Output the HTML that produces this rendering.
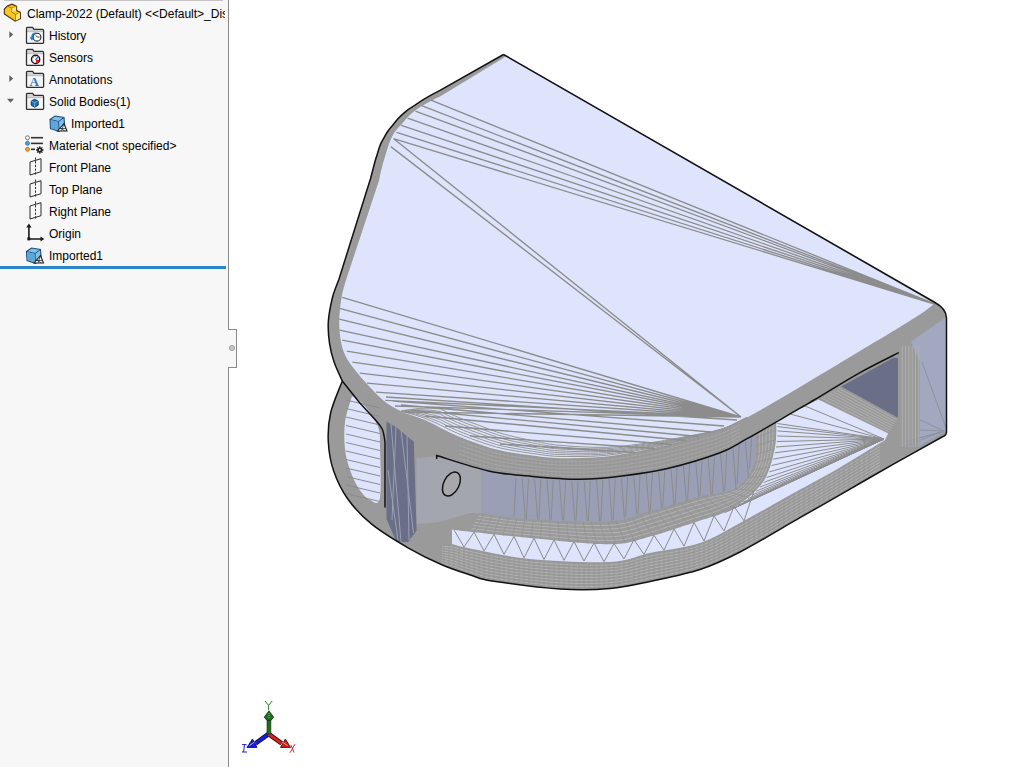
<!DOCTYPE html>
<html><head><meta charset="utf-8">
<style>
html,body{margin:0;padding:0;width:1031px;height:767px;overflow:hidden;background:#fff;font-family:"Liberation Sans",sans-serif;}
#panel{position:absolute;left:0;top:0;width:228px;height:767px;background:#f7f7f7;}
#pborder{position:absolute;left:228px;top:0;width:1px;height:767px;background:#8a8a8a;}
#tab{position:absolute;left:228px;top:329px;width:9px;height:39px;background:#f7f7f7;border:1px solid #8a8a8a;border-left:none;box-sizing:border-box;}
#dot{position:absolute;left:229px;top:345px;width:6px;height:6px;border-radius:50%;background:#c8c8c8;border:1px solid #9a9a9a;box-sizing:border-box;}
#topbox{position:absolute;left:4px;top:-10px;width:219px;height:11px;border:1px solid #c4c4c4;box-sizing:border-box;}
.row{position:absolute;height:22px;font-size:12px;color:#000;white-space:nowrap;line-height:22px;}
.ic{position:absolute;}
#bl{position:absolute;left:0;top:266px;width:226px;height:3px;background:#2a86c6;}
#view{position:absolute;left:0;top:0;}
</style></head><body>
<svg width="1031" height="767" style="position:absolute;left:0;top:0;">
<path d="M503.5,54.5 L935,302.5 Q946.5,309 946.5,318 L946.5,432 Q946.5,435.5 942,437 C933.8,441.6 910.0,454.8 893.0,464.4 C876.0,474.0 855.5,485.9 840.0,494.8 C824.5,503.7 816.7,508.2 800.0,517.7 C783.3,527.2 756.7,543.4 740.0,552.0 C723.3,560.6 715.0,564.6 700.0,569.5 C685.0,574.4 665.0,578.2 650.0,581.4 C635.0,584.6 625.0,587.2 610.0,588.5 C595.0,589.8 579.7,590.2 560.0,589.0 C540.3,587.8 506.7,583.2 492.0,581.0 C477.3,578.8 480.3,578.2 472.0,575.5 C463.7,572.8 453.1,569.6 442.4,565.0 C431.7,560.4 419.8,554.6 408.0,547.8 C396.2,541.0 381.7,532.3 371.7,524.2 C361.7,516.1 354.2,508.0 347.8,499.0 C341.4,490.0 336.8,479.9 333.5,470.4 C330.2,460.8 328.8,451.3 328.3,441.7 C327.8,432.1 328.3,423.1 330.6,413.0 C332.9,402.9 340.4,386.3 342.3,381.0 C340.9,377.9 336.2,368.3 334.1,362.1 C332.0,355.9 330.6,350.6 329.6,343.9 C328.6,337.2 327.9,329.6 328.3,322.0 C328.8,314.4 330.6,305.2 332.3,298.2 C334.0,291.2 337.6,283.0 338.7,280.0L370.4,179 C373,170 375,160 376.9,155.6 C379,148 380,144 382.1,141.2 C386,134 388,130 391.3,126.9 C396,121 399,117 403,113.9 C407,110 411,107.5 414.7,105.4 C422,100 430,95.5 440,90.4 L503.5,54.5Z" fill="#9a9a9a"/>
<path d="M506,56.2 L934.5,303.6  C924.2,313.5 882.8,337.5 860.0,351.0 C837.2,364.5 818.8,375.9 800.0,387.0 C781.2,398.1 760.3,410.4 747.0,417.6 C733.7,424.8 730.5,426.5 720.0,430.3 C709.5,434.1 695.2,437.3 684.1,440.3 C673.0,443.3 666.0,445.4 653.1,448.1 C640.2,450.8 622.1,454.9 606.6,456.6 C591.1,458.3 572.3,458.4 560.0,458.2 C547.7,458.0 543.2,457.1 532.6,455.6 C522.0,454.2 508.9,452.8 496.4,449.5 C483.9,446.2 469.5,440.9 457.6,436.0 C445.7,431.1 434.3,424.1 425.0,420.0 C415.7,415.9 408.5,414.7 401.6,411.4 C394.7,408.1 389.2,405.0 383.4,400.4 C377.6,395.8 371.6,388.9 367.0,384.0 C362.4,379.1 359.4,375.4 356.0,371.2 C352.6,366.9 349.3,363.1 346.9,358.5 C344.5,353.9 342.7,350.0 341.4,343.9 C340.1,337.8 339.2,329.6 339.2,322.0 C339.2,314.4 340.3,305.2 341.4,298.2 C342.5,291.2 345.2,283.0 346.0,280.0 L379.2,180 C381,170 383,163 384.5,158.2 C387,150 389,143 391.2,138.5 C394,132 397.5,128 401.5,124.5 C407,117 413,111 421,106.5 C428,102.5 434,99 440,96.5 L503,58.3 Z" fill="#dde4fc"/>
<path d="M946.5,317 L946.5,429 L943,432.5 L920,445.5 L920,362 L911,341.6 Z" fill="#a2a8c0"/>
<path d="M944,431 L920,420 M944,431 L920,430 M944,431 L920,438 M944,431 L905,442 M944,431 L900,448" stroke="#8f93a3" stroke-width="1" fill="none"/>
<path d="M841.3,386.5 L893.4,357.8 L898,358 L898,417.8 Z" fill="#6a6e86"/>
<path d="M818.4,399.5 L888.2,433.4 L885,440 C877.5,444.6 854.2,459.1 840.0,467.4 C825.8,475.7 816.7,480.3 800.0,489.6 C783.3,498.9 756.7,514.1 740.0,523.0 C723.3,531.9 715.0,538.0 700.0,543.0 C685.0,548.0 665.0,549.8 650.0,553.0 C635.0,556.2 630.0,561.0 610.0,562.0 C590.0,563.0 553.3,561.2 530.0,559.0 C506.7,556.8 483.0,551.0 470.0,548.5 C457.0,546.0 455.0,544.8 452.0,544.0 L452,529.5 C455.0,529.9 457.0,530.4 470.0,531.8 C483.0,533.2 506.7,535.9 530.0,538.0 C553.3,540.1 590.0,544.5 610.0,544.3 C630.0,544.1 635.0,540.6 650.0,536.6 C665.0,532.6 687.8,524.5 700.0,520.5 C712.2,516.5 715.7,516.4 723.5,512.7 C731.3,509.1 740.0,504.5 747.0,498.6 C754.0,492.7 761.0,486.1 765.7,477.5 C770.4,468.9 773.2,456.0 775.0,447.0 C776.8,438.0 776.1,427.4 776.3,423.5 L776.3,421 L818.4,399.5Z" fill="#dde4fc"/>
<path d="M352.0,396.0 C353.7,397.2 358.5,399.5 362.0,403.0 C365.5,406.5 370.2,412.5 373.0,417.0 C375.8,421.5 377.8,425.3 379.0,430.0 C380.2,434.7 379.8,433.7 380.0,445.0 C380.2,456.3 381.7,488.8 380.0,498.0 C378.3,507.2 373.5,501.5 370.0,500.0 C366.5,498.5 362.3,494.0 359.0,489.0 C355.7,484.0 352.3,476.7 350.0,470.0 C347.7,463.3 345.8,457.0 345.0,449.0 C344.2,441.0 343.8,430.8 345.0,422.0 C346.2,413.2 350.8,400.3 352.0,396.0Z" fill="#dde4fc"/>
<path d="M480,468 C488.8,469.6 515.9,475.4 532.6,477.5 C549.3,479.6 565.1,480.4 580.0,480.3 C594.9,480.2 607.2,478.8 622.0,477.0 C636.8,475.2 652.3,473.2 668.6,469.3 C684.9,465.4 706.9,458.7 720.0,453.8 C733.1,448.9 740.8,443.0 747.0,439.7 C753.2,436.4 755.3,434.9 757.0,434.0 L756,437.6 C755.7,442.3 757.5,457.1 754.0,465.7 C750.5,474.3 744.0,483.9 735.0,489.0 C726.0,494.1 714.2,492.8 700.0,496.5 C685.8,500.2 665.0,506.9 650.0,511.0 C635.0,515.1 630.0,520.0 610.0,521.4 C590.0,522.8 551.7,520.7 530.0,519.3 C508.3,517.9 488.3,514.0 480.0,513.0Z" fill="#9a9fb6"/>
<path d="M416.6,458 L437,456.5 L470,466 L481,468.5 L481,513 L470,513 L440,522 L416.6,524 Z" fill="#a3a5af"/>
<path d="M386.5,421.6 L396.6,427.4 L413.8,441.7 L416.6,530.6 L408,542 L396.6,542 L386.5,519 Z" fill="#6a6e86"/>
<path d="M391,424 L401,542 M401,430 L413.5,533 M388,470 L398,540 M396,427 L392,520 M407,436 L409,540" stroke="#9aa0b4" stroke-width="1" fill="none"/>
<path d="M516.0,478.1 L514.0,517.5 M522.2,478.4 L525.2,518.3 M528.4,478.7 L526.4,519.1 M534.6,479.0 L537.6,519.4 M540.8,479.3 L538.8,519.6 M547.0,479.7 L550.0,519.7 M553.2,480.0 L551.2,519.9 M559.4,480.3 L562.4,520.1 M565.6,480.6 L563.6,520.2 M571.8,480.9 L574.8,520.4 M578.0,481.2 L576.0,520.6 M584.2,481.0 L587.2,520.7 M590.4,480.5 L588.4,520.9 M596.6,480.0 L599.6,521.0 M602.8,479.5 L600.8,521.2 M609.0,479.0 L612.0,521.4 M615.2,478.5 L613.2,520.0 M621.4,478.0 L624.4,518.4 M627.6,477.1 L625.6,516.8 M633.8,476.1 L636.8,515.2 M640.0,475.0 L638.0,513.6 M646.2,474.0 L649.2,512.0 M652.4,473.0 L650.4,510.3 M658.6,472.0 L661.6,508.5 M664.8,470.9 L662.8,506.7 M671.0,469.6 L674.0,504.9 M677.2,467.7 L675.2,503.1 M683.4,465.8 L686.4,501.3 M689.6,464.0 L687.6,499.5 M695.8,462.1 L698.8,497.7 M702.0,460.2 L700.0,496.1 M708.2,458.4 L711.2,494.7 M714.4,456.5 L712.4,493.4 M720.6,454.5 L723.6,492.1 M726.8,451.2 L724.8,490.8 M733.0,448.0 L736.0,489.4 M739.2,444.8 L737.2,483.8 M745.4,441.5 L748.4,476.2 M751.6,438.1 L749.6,468.6 M884,439 L777.3,423.5 M884,439 L777.3,426.6 M884,439 L777.3,430.9 M884,439 L777.2,436.0 M884,439 L776.8,441.5 M884,439 L776.0,447.0 M884,439 L774.8,452.8 M884,439 L773.3,459.1 M884,439 L771.5,465.6 M884,439 L769.3,471.9 M884,439 L766.7,477.5 M884,439 L763.6,482.4 M884,439 L760.1,487.0 M884,439 L756.3,491.1 M884,439 L752.2,495.0 M884,439 L748.0,498.6 M884,439 L743.2,502.1 M884,439 L737.8,505.4 M884,439 L732.4,508.4 M884,439 L727.8,510.9 M884,439 L724.5,512.7 M884,439 L790.0,414.0 M884,439 L805.0,406.0 M454.0,529.8 L464.0,547.0 L474.0,532.2 L484.0,550.9 L494.0,534.3 L504.0,554.4 L514.0,536.3 L524.0,557.9 L534.0,538.3 L544.0,559.5 L554.0,539.9 L564.0,560.3 L574.0,541.5 L584.0,561.0 L594.0,543.0 L604.0,561.8 L614.0,543.5 L624.0,558.9 L634.0,539.7 L644.0,554.4 L654.0,535.3 L664.0,550.2 L674.0,528.9 L684.0,546.2 L694.0,522.4 L704.0,541.0 L714.0,515.9 L724.0,531.0 L734.0,506.4 L744.0,520.8 L754.0,490.7 M346.0,400.0 L380,408.0 M346.0,408.5 L380,416.5 M346.0,417.0 L380,425.0 M346.0,425.5 L380,433.5 M346.0,434.0 L380,442.0 M346.0,442.5 L380,450.5 M346.0,451.0 L380,459.0 M346.0,459.5 L380,467.5 M346.0,468.0 L380,476.0 M346.0,476.5 L380,484.5 M346.0,485.0 L380,493.0 M346.0,493.5 L380,501.5" stroke="#8c8c8c" stroke-width="1" fill="none"/>
<path d="M442.0,546.3 L452.9,547.0 L463.9,550.1 L474.9,552.5 L485.8,554.9 L496.8,557.0 L507.7,559.0 L518.6,560.6 L529.6,562.0 L540.5,562.9 L551.5,563.7 L562.5,564.4 L573.4,564.9 L584.4,565.2 L595.3,565.3 L606.2,565.1 L617.2,564.3 L628.1,562.3 L639.1,559.1 L650.0,556.1 L661.0,554.1 L672.0,552.3 L682.9,550.3 L693.9,547.8 L704.8,544.2 L715.8,539.4 L726.7,533.5 L737.6,527.5 L748.6,521.6 L759.5,515.5 L770.5,509.3 L781.5,503.2 L792.4,497.0 L803.4,490.9 L814.3,484.8 L825.2,478.8 L836.2,472.6 L847.1,466.2 L858.1,459.6 L869.0,453.0 L880.0,446.3 M442.0,548.7 L452.9,549.7 L463.9,552.9 L474.9,555.5 L485.8,558.0 L496.8,560.1 L507.7,562.0 L518.6,563.6 L529.6,565.0 L540.5,566.0 L551.5,566.8 L562.5,567.5 L573.4,568.0 L584.4,568.3 L595.3,568.3 L606.2,568.0 L617.2,567.3 L628.1,565.3 L639.1,562.1 L650.0,559.3 L661.0,557.2 L672.0,555.3 L682.9,553.3 L693.9,550.7 L704.8,547.2 L715.8,542.4 L726.7,536.7 L737.6,530.7 L748.6,524.8 L759.5,518.7 L770.5,512.5 L781.5,506.3 L792.4,500.1 L803.4,494.0 L814.3,487.9 L825.2,481.9 L836.2,475.7 L847.1,469.3 L858.1,462.7 L869.0,456.1 L880.0,449.5 M442.0,551.0 L452.9,552.4 L463.9,555.7 L474.9,558.5 L485.8,561.2 L496.8,563.2 L507.7,565.0 L518.6,566.6 L529.6,568.0 L540.5,569.0 L551.5,569.9 L562.5,570.6 L573.4,571.1 L584.4,571.3 L595.3,571.3 L606.2,571.0 L617.2,570.2 L628.1,568.2 L639.1,565.2 L650.0,562.5 L661.0,560.4 L672.0,558.4 L682.9,556.2 L693.9,553.7 L704.8,550.1 L715.8,545.5 L726.7,539.8 L737.6,533.9 L748.6,528.0 L759.5,521.9 L770.5,515.7 L781.5,509.5 L792.4,503.3 L803.4,497.1 L814.3,491.0 L825.2,484.9 L836.2,478.7 L847.1,472.3 L858.1,465.8 L869.0,459.3 L880.0,452.7 M442.0,553.3 L452.9,555.2 L463.9,558.6 L474.9,561.5 L485.8,564.3 L496.8,566.3 L507.7,568.1 L518.6,569.7 L529.6,571.0 L540.5,572.1 L551.5,573.0 L562.5,573.7 L573.4,574.2 L584.4,574.4 L595.3,574.3 L606.2,574.0 L617.2,573.1 L628.1,571.2 L639.1,568.3 L650.0,565.6 L661.0,563.5 L672.0,561.4 L682.9,559.2 L693.9,556.6 L704.8,553.1 L715.8,548.5 L726.7,543.0 L737.6,537.1 L748.6,531.2 L759.5,525.1 L770.5,518.9 L781.5,512.7 L792.4,506.4 L803.4,500.2 L814.3,494.1 L825.2,488.0 L836.2,481.8 L847.1,475.4 L858.1,468.9 L869.0,462.4 L880.0,455.9 M442.0,555.7 L452.9,557.9 L463.9,561.4 L474.9,564.5 L485.8,567.4 L496.8,569.4 L507.7,571.1 L518.6,572.7 L529.6,574.0 L540.5,575.1 L551.5,576.0 L562.5,576.8 L573.4,577.2 L584.4,577.4 L595.3,577.4 L606.2,576.9 L617.2,576.0 L628.1,574.2 L639.1,571.4 L650.0,568.8 L661.0,566.6 L672.0,564.5 L682.9,562.2 L693.9,559.6 L704.8,556.1 L715.8,551.5 L726.7,546.1 L737.6,540.4 L748.6,534.5 L759.5,528.4 L770.5,522.1 L781.5,515.8 L792.4,509.5 L803.4,503.3 L814.3,497.2 L825.2,491.0 L836.2,484.8 L847.1,478.5 L858.1,472.0 L869.0,465.6 L880.0,459.1 M442.0,558.0 L452.9,560.6 L463.9,564.2 L474.9,567.5 L485.8,570.5 L496.8,572.5 L507.7,574.1 L518.6,575.7 L529.6,577.0 L540.5,578.1 L551.5,579.1 L562.5,579.9 L573.4,580.3 L584.4,580.5 L595.3,580.4 L606.2,579.9 L617.2,579.0 L628.1,577.1 L639.1,574.5 L650.0,571.9 L661.0,569.7 L672.0,567.6 L682.9,565.2 L693.9,562.5 L704.8,559.0 L715.8,554.6 L726.7,549.3 L737.6,543.6 L748.6,537.7 L759.5,531.6 L770.5,525.3 L781.5,519.0 L792.4,512.7 L803.4,506.4 L814.3,500.3 L825.2,494.1 L836.2,487.9 L847.1,481.5 L858.1,475.1 L869.0,468.7 L880.0,462.3 M442.0,560.3 L452.9,563.4 L463.9,567.1 L474.9,570.5 L485.8,573.7 L496.8,575.5 L507.7,577.2 L518.6,578.7 L529.6,580.0 L540.5,581.2 L551.5,582.2 L562.5,582.9 L573.4,583.4 L584.4,583.6 L595.3,583.4 L606.2,582.9 L617.2,581.9 L628.1,580.1 L639.1,577.6 L650.0,575.1 L661.0,572.9 L672.0,570.6 L682.9,568.2 L693.9,565.5 L704.8,562.0 L715.8,557.6 L726.7,552.4 L737.6,546.8 L748.6,540.9 L759.5,534.8 L770.5,528.5 L781.5,522.2 L792.4,515.8 L803.4,509.6 L814.3,503.3 L825.2,497.1 L836.2,490.9 L847.1,484.6 L858.1,478.2 L869.0,471.8 L880.0,465.5 M442.0,562.7 L452.9,566.1 L463.9,569.9 L474.9,573.5 L485.8,576.8 L496.8,578.6 L507.7,580.2 L518.6,581.7 L529.6,583.0 L540.5,584.2 L551.5,585.3 L562.5,586.0 L573.4,586.5 L584.4,586.6 L595.3,586.4 L606.2,585.8 L617.2,584.8 L628.1,583.0 L639.1,580.7 L650.0,578.2 L661.0,576.0 L672.0,573.7 L682.9,571.2 L693.9,568.4 L704.8,564.9 L715.8,560.7 L726.7,555.6 L737.6,550.0 L748.6,544.1 L759.5,538.0 L770.5,531.7 L781.5,525.3 L792.4,519.0 L803.4,512.7 L814.3,506.4 L825.2,500.2 L836.2,493.9 L847.1,487.6 L858.1,481.3 L869.0,475.0 L880.0,468.7" stroke="#b9b9b9" stroke-width="0.8" fill="none"/>
<path d="M444.0,544.5 L444.0,565.1 M449.0,544.5 L449.0,566.9 M454.0,545.1 L454.0,568.7 M459.0,546.6 L459.0,570.5 M464.0,547.8 L464.0,572.3 M469.0,548.8 L469.0,574.0 M474.0,549.8 L474.0,575.7 M479.0,550.8 L479.0,577.7 M484.0,551.9 L484.0,579.1 M489.0,552.9 L489.0,580.0 M494.0,553.9 L494.0,580.8 M499.0,554.9 L499.0,581.5 M504.0,555.8 L504.0,582.2 M509.0,556.7 L509.0,582.9 M514.0,557.5 L514.0,583.6 M519.0,558.2 L519.0,584.2 M524.0,558.8 L524.0,584.9 M529.0,559.4 L529.0,585.5 M534.0,559.9 L534.0,586.0 M539.0,560.3 L539.0,586.6 M544.0,560.7 L544.0,587.1 M549.0,561.0 L549.0,587.6 M554.0,561.3 L554.0,588.0 M559.0,561.6 L559.0,588.4 M564.0,561.9 L564.0,588.7 M569.0,562.1 L569.0,589.0 M574.0,562.3 L574.0,589.1 M579.0,562.5 L579.0,589.2 M584.0,562.6 L584.0,589.2 M589.0,562.7 L589.0,589.1 M594.0,562.8 L594.0,589.0 M599.0,562.8 L599.0,588.8 M604.0,562.7 L604.0,588.5 M609.0,562.5 L609.0,588.1 M614.0,562.2 L614.0,587.6 M619.0,561.6 L619.0,587.0 M624.0,560.8 L624.0,586.2 M629.0,559.6 L629.0,585.3 M634.0,558.1 L634.0,584.3 M639.0,556.5 L639.0,583.3 M644.0,555.0 L644.0,582.2 M649.0,553.7 L649.0,581.1 M654.0,552.7 L654.0,580.1 M659.0,551.8 L659.0,579.0 M664.0,551.0 L664.0,578.0 M669.0,550.2 L669.0,576.9 M674.0,549.4 L674.0,575.8 M679.0,548.5 L679.0,574.7 M684.0,547.5 L684.0,573.5 M689.0,546.5 L689.0,572.2 M694.0,545.3 L694.0,570.8 M699.0,543.8 L699.0,569.3 M704.0,542.1 L704.0,567.6 M709.0,540.0 L709.0,565.9 M714.0,537.7 L714.0,563.9 M719.0,535.2 L719.0,561.8 M724.0,532.4 L724.0,559.5 M729.0,529.6 L729.0,557.1 M734.0,526.8 L734.0,554.6 M739.0,524.0 L739.0,552.0 M744.0,521.3 L744.0,549.4 M749.0,518.6 L749.0,546.7 M754.0,515.9 L754.0,543.9 M759.0,513.1 L759.0,541.0 M764.0,510.3 L764.0,538.2 M769.0,507.5 L769.0,535.3 M774.0,504.7 L774.0,532.4 M779.0,501.9 L779.0,529.4 M784.0,499.1 L784.0,526.5 M789.0,496.3 L789.0,523.6 M794.0,493.5 L794.0,520.7 M799.0,490.7 L799.0,517.8 M804.0,487.9 L804.0,514.9 M809.0,485.1 L809.0,512.1 M814.0,482.4 L814.0,509.2 M819.0,479.7 L819.0,506.3 M824.0,476.9 L824.0,503.5 M829.0,474.2 L829.0,500.6 M834.0,471.4 L834.0,497.7 M839.0,468.5 L839.0,494.9 M844.0,465.5 L844.0,492.0 M849.0,462.5 L849.0,489.1 M854.0,459.5 L854.0,486.3 M859.0,456.5 L859.0,483.4 M864.0,453.4 L864.0,480.5 M869.0,450.4 L869.0,477.7" stroke="#929292" stroke-width="0.6" fill="none"/>
<path d="M761.0,428.5 L759.9,432.4 L759.4,436.6 L759.3,440.9 L759.3,445.1 L759.3,449.3 L759.1,453.5 L758.7,457.7 L757.9,461.9 L756.6,465.9 L754.9,469.8 L752.9,473.5 L750.7,477.1 L748.1,480.5 L745.3,483.7 L742.2,486.5 L738.9,489.0 L735.2,491.1 L731.3,492.7 L727.3,493.9 L723.3,494.9 L719.2,495.8 L715.1,496.6 L711.0,497.5 L706.9,498.5 L702.8,499.6 L698.8,500.7 L694.7,501.9 L690.6,503.1 L686.6,504.3 L682.5,505.5 L678.5,506.7 L674.4,508.0 L670.4,509.2 L666.3,510.4 L662.3,511.7 L658.2,512.9 L654.1,514.1 L650.1,515.3 L646.0,516.5 L642.0,517.9 L638.0,519.3 L634.0,520.7 L630.0,522.0 L625.9,523.0 L621.7,523.9 L617.6,524.5 L613.4,525.0 L609.1,525.3 L604.9,525.5 L600.7,525.5 L596.4,525.6 L592.2,525.5 L588.0,525.5 L583.7,525.3 L579.5,525.2 L575.3,525.0 L571.0,524.9 L566.8,524.7 L562.6,524.4 L558.3,524.2 L554.1,524.0 L549.9,523.7 L545.7,523.4 L541.4,523.2 L537.2,522.9 L533.0,522.6 L528.8,522.3 L524.5,522.0 L520.3,521.6 L516.1,521.2 L511.9,520.7 L507.7,520.2 L503.5,519.7 L499.3,519.1 L495.1,518.5 L490.9,517.9 L486.7,517.3 L482.5,516.7 L478.3,516.1 M764.1,427.0 L763.2,431.0 L762.7,435.3 L762.6,439.6 L762.6,443.9 L762.5,448.3 L762.2,452.6 L761.7,456.9 L760.8,461.1 L759.5,465.2 L757.9,469.2 L756.0,473.1 L753.8,476.8 L751.4,480.4 L748.6,483.7 L745.5,486.7 L742.2,489.4 L738.6,491.7 L734.8,493.6 L730.8,495.2 L726.8,496.5 L722.8,497.7 L718.7,498.9 L714.5,500.0 L710.4,501.2 L706.3,502.5 L702.2,503.7 L698.0,504.9 L693.8,506.1 L689.7,507.4 L685.5,508.6 L681.4,509.9 L677.3,511.2 L673.1,512.5 L669.0,513.8 L664.8,515.1 L660.7,516.4 L656.6,517.6 L652.4,518.8 L648.3,520.1 L644.2,521.5 L640.0,522.9 L635.9,524.2 L631.8,525.5 L627.6,526.7 L623.4,527.6 L619.1,528.3 L614.8,528.7 L610.5,529.0 L606.2,529.2 L601.8,529.3 L597.5,529.3 L593.2,529.2 L588.8,529.1 L584.5,528.9 L580.2,528.8 L575.8,528.6 L571.5,528.3 L567.2,528.1 L562.9,527.8 L558.5,527.5 L554.2,527.3 L549.9,527.0 L545.6,526.7 L541.3,526.3 L536.9,526.0 L532.6,525.7 L528.3,525.4 L524.0,525.0 L519.7,524.6 L515.3,524.2 L511.0,523.7 L506.7,523.2 L502.4,522.7 L498.1,522.2 L493.8,521.6 L489.5,521.0 L485.3,520.4 L481.0,519.8 L476.7,519.3 M767.1,425.5 L766.4,429.5 L766.1,433.9 L766.0,438.4 L766.0,442.8 L765.8,447.2 L765.3,451.6 L764.7,456.0 L763.8,460.3 L762.5,464.5 L760.9,468.7 L759.1,472.7 L757.0,476.6 L754.6,480.3 L751.8,483.7 L748.8,486.9 L745.5,489.8 L741.9,492.4 L738.2,494.5 L734.3,496.5 L730.4,498.2 L726.3,499.7 L722.2,501.1 L718.1,502.6 L713.9,504.0 L709.8,505.4 L705.5,506.8 L701.3,508.0 L697.0,509.2 L692.8,510.5 L688.6,511.8 L684.3,513.1 L680.1,514.5 L675.9,515.8 L671.7,517.2 L667.4,518.5 L663.2,519.8 L659.0,521.1 L654.7,522.4 L650.5,523.7 L646.3,525.1 L642.1,526.4 L637.8,527.8 L633.6,529.1 L629.3,530.3 L625.0,531.3 L620.7,532.0 L616.3,532.5 L611.8,532.8 L607.4,533.0 L603.0,533.0 L598.5,533.0 L594.1,532.9 L589.7,532.7 L585.3,532.6 L580.8,532.3 L576.4,532.1 L572.0,531.8 L567.6,531.5 L563.2,531.2 L558.7,530.9 L554.3,530.5 L549.9,530.2 L545.5,529.9 L541.1,529.5 L536.7,529.2 L532.2,528.8 L527.8,528.5 L523.4,528.1 L519.0,527.7 L514.6,527.2 L510.2,526.8 L505.8,526.3 L501.4,525.8 L497.0,525.2 L492.6,524.7 L488.2,524.1 L483.8,523.5 L479.4,522.9 L475.0,522.4 M770.2,424.0 L769.7,428.1 L769.5,432.6 L769.4,437.1 L769.3,441.6 L769.0,446.1 L768.4,450.6 L767.7,455.1 L766.7,459.5 L765.5,463.9 L764.0,468.1 L762.2,472.3 L760.2,476.3 L757.8,480.2 L755.1,483.8 L752.1,487.1 L748.8,490.2 L745.3,493.0 L741.6,495.5 L737.8,497.8 L733.9,499.8 L729.9,501.7 L725.8,503.4 L721.6,505.1 L717.4,506.7 L713.2,508.3 L708.9,509.8 L704.6,511.0 L700.2,512.3 L695.9,513.6 L691.6,515.0 L687.3,516.4 L683.0,517.8 L678.7,519.2 L674.3,520.6 L670.0,522.0 L665.7,523.3 L661.4,524.7 L657.1,526.0 L652.7,527.3 L648.4,528.7 L644.1,530.0 L639.8,531.3 L635.4,532.7 L631.1,533.9 L626.7,534.9 L622.2,535.7 L617.7,536.3 L613.2,536.6 L608.7,536.7 L604.1,536.8 L599.6,536.7 L595.1,536.6 L590.6,536.4 L586.0,536.2 L581.5,535.9 L577.0,535.6 L572.5,535.3 L568.0,534.9 L563.4,534.6 L558.9,534.2 L554.4,533.8 L549.9,533.4 L545.4,533.1 L540.9,532.7 L536.4,532.3 L531.9,531.9 L527.3,531.5 L522.8,531.1 L518.3,530.7 L513.8,530.3 L509.3,529.8 L504.8,529.3 L500.3,528.8 L495.8,528.3 L491.3,527.7 L486.8,527.2 L482.3,526.6 L477.8,526.1 L473.3,525.5 M773.2,422.5 L773.0,426.6 L772.9,431.2 L772.8,435.9 L772.6,440.5 L772.3,445.1 L771.5,449.7 L770.7,454.2 L769.7,458.7 L768.4,463.2 L767.0,467.6 L765.3,471.9 L763.4,476.0 L761.1,480.0 L758.4,483.8 L755.4,487.3 L752.1,490.6 L748.7,493.6 L745.0,496.4 L741.3,499.1 L737.4,501.4 L733.4,503.6 L729.3,505.7 L725.2,507.6 L720.9,509.5 L716.7,511.2 L712.3,512.8 L707.9,514.1 L703.4,515.4 L699.0,516.7 L694.6,518.1 L690.2,519.6 L685.8,521.0 L681.4,522.5 L677.0,523.9 L672.6,525.4 L668.2,526.8 L663.8,528.2 L659.4,529.6 L655.0,530.9 L650.5,532.3 L646.1,533.6 L641.7,534.9 L637.2,536.2 L632.8,537.5 L628.3,538.6 L623.7,539.4 L619.2,540.0 L614.5,540.3 L609.9,540.5 L605.3,540.5 L600.7,540.4 L596.0,540.3 L591.4,540.0 L586.8,539.8 L582.2,539.5 L577.6,539.1 L573.0,538.7 L568.3,538.4 L563.7,538.0 L559.1,537.5 L554.5,537.1 L549.9,536.7 L545.3,536.3 L540.7,535.8 L536.1,535.4 L531.5,535.0 L526.9,534.6 L522.3,534.2 L517.7,533.7 L513.1,533.3 L508.5,532.8 L503.9,532.3 L499.3,531.8 L494.7,531.3 L490.1,530.8 L485.5,530.2 L480.9,529.7 L476.3,529.2 L471.7,528.7" stroke="#b8b8b8" stroke-width="0.8" fill="none"/>
<path d="M758.0,430.0 L776.3,421.0 M756.0,438.0 L776.3,429.9 M756.0,446.2 L776.0,439.3 M756.0,454.5 L774.7,448.7 M754.9,462.7 L772.6,457.9 M751.8,470.3 L770.0,467.0 M747.5,477.4 L766.6,475.8 M742.1,483.6 L761.6,483.8 M735.5,488.7 L755.4,491.0 M727.9,491.7 L748.5,497.4 M719.8,493.3 L741.0,503.1 M711.6,494.3 L732.9,508.0 M703.4,495.7 L724.5,512.2 M695.4,497.7 L715.7,515.8 M687.4,500.0 L706.6,518.4 M679.5,502.3 L697.6,521.3 M671.6,504.7 L688.7,524.3 M663.6,507.1 L679.7,527.3 M655.7,509.4 L670.7,530.3 M647.7,511.7 L661.7,533.2 M639.9,514.3 L652.7,535.9 M632.1,517.1 L643.6,538.4 M624.2,519.4 L634.5,541.1 M616.0,520.8 L625.3,543.2 M607.8,521.5 L615.9,544.1 M599.5,521.8 L606.4,544.3 M591.2,521.8 L597.0,544.0 M583.0,521.7 L587.6,543.4 M574.7,521.5 L578.1,542.6 M566.4,521.2 L568.7,541.8 M558.1,520.9 L559.3,540.9 M549.9,520.5 L549.9,539.9 M541.6,520.0 L540.5,539.0 M533.4,519.5 L531.1,538.1 M525.1,518.9 L521.7,537.2 M516.9,518.2 L512.3,536.3 M508.7,517.2 L502.9,535.3 M500.5,516.1 L493.5,534.3 M492.3,514.9 L484.1,533.3 M484.1,513.6 L474.7,532.3" stroke="#8e8e8e" stroke-width="0.6" fill="none"/>
<path d="M460.0,441.2 L467.0,443.7 L474.0,446.3 L481.0,448.7 L488.0,450.9 L495.0,452.9 L502.0,454.6 L509.0,455.9 L516.0,457.0 L523.0,457.9 L530.0,458.8 L537.0,459.7 L544.0,460.6 L551.0,461.2 L558.0,461.6 L565.0,461.7 L572.0,461.7 L579.0,461.7 L586.0,461.5 L593.0,461.2 L600.0,460.7 L607.0,460.1 L614.0,459.2 L621.0,458.1 L628.0,456.9 L635.0,455.6 L642.0,454.3 L649.0,452.8 L656.0,451.4 L663.0,449.8 L670.0,448.1 L677.0,446.2 L684.0,444.3 L691.0,442.5 L698.0,440.6 L705.0,438.7 L712.0,436.7 L719.0,434.4 L726.0,431.8 L733.0,428.6 L740.0,424.9 M460.0,445.5 L467.0,448.0 L474.0,450.4 L481.0,452.8 L488.0,454.9 L495.0,456.8 L502.0,458.3 L509.0,459.6 L516.0,460.6 L523.0,461.4 L530.0,462.3 L537.0,463.1 L544.0,464.0 L551.0,464.6 L558.0,465.0 L565.0,465.1 L572.0,465.2 L579.0,465.2 L586.0,465.0 L593.0,464.7 L600.0,464.3 L607.0,463.6 L614.0,462.7 L621.0,461.7 L628.0,460.6 L635.0,459.4 L642.0,458.1 L649.0,456.7 L656.0,455.3 L663.0,453.8 L670.0,452.0 L677.0,450.2 L684.0,448.3 L691.0,446.4 L698.0,444.5 L705.0,442.6 L712.0,440.5 L719.0,438.1 L726.0,435.5 L733.0,432.3 L740.0,428.5 M460.0,449.9 L467.0,452.3 L474.0,454.6 L481.0,456.8 L488.0,458.9 L495.0,460.6 L502.0,462.1 L509.0,463.2 L516.0,464.2 L523.0,465.0 L530.0,465.8 L537.0,466.6 L544.0,467.3 L551.0,468.0 L558.0,468.4 L565.0,468.6 L572.0,468.7 L579.0,468.7 L586.0,468.6 L593.0,468.3 L600.0,467.8 L607.0,467.1 L614.0,466.3 L621.0,465.3 L628.0,464.3 L635.0,463.1 L642.0,461.9 L649.0,460.6 L656.0,459.2 L663.0,457.7 L670.0,456.0 L677.0,454.2 L684.0,452.3 L691.0,450.4 L698.0,448.5 L705.0,446.4 L712.0,444.3 L719.0,441.9 L726.0,439.2 L733.0,435.9 L740.0,432.1 M460.0,454.2 L467.0,456.5 L474.0,458.8 L481.0,460.9 L488.0,462.8 L495.0,464.5 L502.0,465.8 L509.0,466.9 L516.0,467.8 L523.0,468.5 L530.0,469.3 L537.0,470.0 L544.0,470.7 L551.0,471.3 L558.0,471.8 L565.0,472.0 L572.0,472.2 L579.0,472.2 L586.0,472.1 L593.0,471.8 L600.0,471.3 L607.0,470.7 L614.0,469.9 L621.0,468.9 L628.0,467.9 L635.0,466.8 L642.0,465.7 L649.0,464.5 L656.0,463.1 L663.0,461.7 L670.0,460.0 L677.0,458.2 L684.0,456.3 L691.0,454.4 L698.0,452.4 L705.0,450.3 L712.0,448.1 L719.0,445.7 L726.0,442.9 L733.0,439.6 L740.0,435.6 M460.0,458.5 L467.0,460.8 L474.0,462.9 L481.0,465.0 L488.0,466.8 L495.0,468.3 L502.0,469.6 L509.0,470.6 L516.0,471.4 L523.0,472.1 L530.0,472.8 L537.0,473.5 L544.0,474.1 L551.0,474.7 L558.0,475.2 L565.0,475.5 L572.0,475.7 L579.0,475.8 L586.0,475.7 L593.0,475.3 L600.0,474.9 L607.0,474.2 L614.0,473.4 L621.0,472.5 L628.0,471.6 L635.0,470.6 L642.0,469.5 L649.0,468.3 L656.0,467.1 L663.0,465.6 L670.0,464.0 L677.0,462.2 L684.0,460.3 L691.0,458.3 L698.0,456.3 L705.0,454.1 L712.0,451.9 L719.0,449.4 L726.0,446.6 L733.0,443.2 L740.0,439.2" stroke="#acacac" stroke-width="0.8" fill="none"/>
<path d="M462.0,438.1 L462.0,463.0 M466.0,439.6 L466.0,464.2 M470.0,441.1 L470.0,465.4 M474.0,442.6 L474.0,466.6 M478.0,444.0 L478.0,467.7 M482.0,445.5 L482.0,468.8 M486.0,446.8 L486.0,469.8 M490.0,448.1 L490.0,470.7 M494.0,449.3 L494.0,471.5 M498.0,450.4 L498.0,472.2 M502.0,451.3 L502.0,472.8 M506.0,452.2 L506.0,473.4 M510.0,452.9 L510.0,473.9 M514.0,453.5 L514.0,474.3 M518.0,454.1 L518.0,474.7 M522.0,454.7 L522.0,475.1 M526.0,455.2 L526.0,475.4 M530.0,455.8 L530.0,475.8 M534.0,456.3 L534.0,476.1 M538.0,456.9 L538.0,476.5 M542.0,457.4 L542.0,476.8 M546.0,457.9 L546.0,477.2 M550.0,458.3 L550.0,477.5 M554.0,458.5 L554.0,477.8 M558.0,458.7 L558.0,478.1 M562.0,458.7 L562.0,478.3 M566.0,458.7 L566.0,478.5 M570.0,458.8 L570.0,478.6 M574.0,458.7 L574.0,478.8 M578.0,458.7 L578.0,478.8 M582.0,458.6 L582.0,478.8 M586.0,458.5 L586.0,478.7 M590.0,458.3 L590.0,478.5 M594.0,458.1 L594.0,478.3 M598.0,457.8 L598.0,478.0 M602.0,457.5 L602.0,477.7 M606.0,457.2 L606.0,477.3 M610.0,456.7 L610.0,476.9 M614.0,456.1 L614.0,476.5 M618.0,455.5 L618.0,476.0 M622.0,454.9 L622.0,475.5 M626.0,454.1 L626.0,475.0 M630.0,453.4 L630.0,474.5 M634.0,452.6 L634.0,474.0 M638.0,451.8 L638.0,473.4 M642.0,451.0 L642.0,472.8 M646.0,450.1 L646.0,472.2 M650.0,449.3 L650.0,471.5 M654.0,448.4 L654.0,470.8 M658.0,447.5 L658.0,470.1 M662.0,446.6 L662.0,469.3 M666.0,445.6 L666.0,468.4 M670.0,444.6 L670.0,467.5 M674.0,443.5 L674.0,466.5 M678.0,442.4 L678.0,465.4 M682.0,441.4 L682.0,464.4 M686.0,440.3 L686.0,463.2 M690.0,439.3 L690.0,462.1 M694.0,438.2 L694.0,460.9 M698.0,437.2 L698.0,459.7 M702.0,436.2 L702.0,458.4 M706.0,435.1 L706.0,457.2 M710.0,434.0 L710.0,455.8 M714.0,432.8 L714.0,454.5 M718.0,431.5 L718.0,453.0 M722.0,430.1 L722.0,451.5 M726.0,428.5 L726.0,449.9 M730.0,426.9 L730.0,448.0" stroke="#939393" stroke-width="0.5" fill="none"/>
<path d="M821.3,397.9 L889.2,432.0 M824.1,396.2 L890.5,429.9 M827.0,394.6 L891.8,427.9 M829.8,393.0 L893.0,425.9 M832.7,391.4 L894.2,423.9 M835.6,389.8 L895.5,421.9 M838.4,388.1 L896.8,419.8 M902.3,346 L902.3,447 M905.6,346 L905.6,447 M908.9,346 L908.9,447 M912.2,346 L912.2,447 M915.5,346 L915.5,447 M918.8,346 L918.8,447" stroke="#b5b5b5" stroke-width="0.8" fill="none"/>
<path d="M922,362 L946,428" stroke="#8c8c8c" stroke-width="0.8"/>
<path d="M747.0,417.6 L744.2,419.0 L740.3,421.0 L735.7,423.3 L730.7,425.8 L725.3,428.1 L720.0,430.2 L714.5,432.0 L708.5,433.7 L702.3,435.3 L696.0,436.9 L689.9,438.4 L684.1,439.8 L678.8,441.2 L674.0,442.4 L669.3,443.6 L664.4,444.8 L659.1,446.0 L653.1,447.3 L646.2,448.7 L638.8,450.2 L630.8,451.7 L622.7,453.1 L614.5,454.3 L606.6,455.3 L598.6,455.9 L590.4,456.3 L582.1,456.5 L574.1,456.5 L566.7,456.5 L560.0,456.4 L554.4,456.2 L549.8,455.8 L545.6,455.4 L541.7,454.8 L537.5,454.2 L532.6,453.5 L527.1,452.7 L521.3,451.8 L515.2,450.9 L509.0,449.8 L502.7,448.5 L496.4,447.0 L490.0,445.1 L483.4,443.0 L476.8,440.7 L470.2,438.3 L463.7,435.8 L457.6,433.3 L451.7,430.7 L445.9,427.9 L440.3,425.0 L435.0,422.5 L429.8,420.3 L425.0,418.3 L420.3,416.7 L415.7,415.2 L411.3,413.9 L407.3,412.9 L404.0,412.0 L401.6,411.3 M747.0,417.6 L744.2,419.0 L740.3,421.0 L735.7,423.3 L730.7,425.8 L725.3,428.1 L720.0,430.1 L714.5,431.8 L708.5,433.5 L702.3,435.0 L696.0,436.5 L689.9,437.9 L684.1,439.3 L678.8,440.6 L674.0,441.8 L669.3,443.0 L664.4,444.1 L659.1,445.3 L653.1,446.4 L646.2,447.7 L638.8,449.2 L630.8,450.6 L622.7,451.9 L614.5,453.1 L606.6,453.9 L598.6,454.5 L590.4,454.8 L582.1,454.9 L574.1,454.9 L566.7,454.7 L560.0,454.5 L554.4,454.3 L549.8,453.9 L545.6,453.4 L541.7,452.8 L537.5,452.1 L532.6,451.3 L527.1,450.5 L521.3,449.6 L515.2,448.6 L509.0,447.4 L502.7,446.1 L496.4,444.5 L490.0,442.5 L483.4,440.3 L476.8,438.0 L470.2,435.6 L463.7,433.1 L457.6,430.6 L451.7,428.0 L445.9,425.2 L440.3,422.3 L435.0,420.2 L429.8,418.2 L425.0,416.6 L420.3,415.3 L415.7,414.2 L411.3,413.2 L407.3,412.4 L404.0,411.7 L401.6,411.2 M747.0,417.6 L744.2,419.0 L740.3,421.0 L735.7,423.3 L730.7,425.8 L725.3,428.0 L720.0,430.0 L714.5,431.6 L708.5,433.2 L702.3,434.7 L696.0,436.1 L689.9,437.5 L684.1,438.8 L678.8,440.1 L674.0,441.2 L669.3,442.3 L664.4,443.4 L659.1,444.5 L653.1,445.6 L646.2,446.8 L638.8,448.2 L630.8,449.5 L622.7,450.8 L614.5,451.8 L606.6,452.6 L598.6,453.1 L590.4,453.3 L582.1,453.3 L574.1,453.2 L566.7,453.0 L560.0,452.7 L554.4,452.4 L549.8,451.9 L545.6,451.4 L541.7,450.8 L537.5,450.0 L532.6,449.2 L527.1,448.3 L521.3,447.3 L515.2,446.3 L509.0,445.1 L502.7,443.6 L496.4,441.9 L490.0,439.9 L483.4,437.7 L476.8,435.3 L470.2,432.9 L463.7,430.4 L457.6,427.9 L451.7,425.3 L445.9,422.5 L440.3,419.6 L435.0,417.8 L429.8,416.2 L425.0,414.9 L420.3,413.9 L415.7,413.1 L411.3,412.4 L407.3,411.9 L404.0,411.4 L401.6,411.1 M747.0,417.6 L744.2,419.0 L740.3,421.0 L735.7,423.3 L730.7,425.8 L725.3,428.0 L720.0,429.9 L714.5,431.5 L708.5,433.0 L702.3,434.4 L696.0,435.8 L689.9,437.1 L684.1,438.3 L678.8,439.5 L674.0,440.6 L669.3,441.7 L664.4,442.7 L659.1,443.7 L653.1,444.8 L646.2,445.9 L638.8,447.2 L630.8,448.5 L622.7,449.6 L614.5,450.6 L606.6,451.3 L598.6,451.6 L590.4,451.8 L582.1,451.7 L574.1,451.5 L566.7,451.2 L560.0,450.9 L554.4,450.5 L549.8,450.0 L545.6,449.4 L541.7,448.7 L537.5,448.0 L532.6,447.1 L527.1,446.1 L521.3,445.1 L515.2,444.0 L509.0,442.7 L502.7,441.2 L496.4,439.4 L490.0,437.3 L483.4,435.0 L476.8,432.6 L470.2,430.2 L463.7,427.7 L457.6,425.2 L451.7,422.6 L445.9,419.8 L440.3,416.9 L435.0,415.4 L429.8,414.2 L425.0,413.2 L420.3,412.6 L415.7,412.0 L411.3,411.7 L407.3,411.4 L404.0,411.2 L401.6,411.0 M747.0,417.6 L744.2,419.0 L740.3,421.0 L735.7,423.3 L730.7,425.8 L725.3,427.9 L720.0,429.8 L714.5,431.3 L708.5,432.8 L702.3,434.1 L696.0,435.4 L689.9,436.6 L684.1,437.8 L678.8,439.0 L674.0,440.0 L669.3,441.0 L664.4,442.0 L659.1,443.0 L653.1,443.9 L646.2,445.0 L638.8,446.2 L630.8,447.4 L622.7,448.5 L614.5,449.3 L606.6,449.9 L598.6,450.2 L590.4,450.3 L582.1,450.1 L574.1,449.8 L566.7,449.4 L560.0,449.0 L554.4,448.6 L549.8,448.0 L545.6,447.4 L541.7,446.7 L537.5,445.9 L532.6,444.9 L527.1,443.9 L521.3,442.8 L515.2,441.6 L509.0,440.3 L502.7,438.7 L496.4,436.9 L490.0,434.7 L483.4,432.3 L476.8,429.9 L470.2,427.5 L463.7,425.0 L457.6,422.5 L451.7,419.9 L445.9,417.1 L440.3,414.2 L435.0,413.1 L429.8,412.2 L425.0,411.6 L420.3,411.2 L415.7,411.0 L411.3,410.9 L407.3,410.9 L404.0,410.9 L401.6,410.9 M747.0,417.6 L744.2,419.0 L740.3,421.0 L735.7,423.3 L730.7,425.8 L725.3,427.9 L720.0,429.7 L714.5,431.1 L708.5,432.5 L702.3,433.8 L696.0,435.0 L689.9,436.2 L684.1,437.3 L678.8,438.4 L674.0,439.4 L669.3,440.4 L664.4,441.3 L659.1,442.2 L653.1,443.1 L646.2,444.1 L638.8,445.2 L630.8,446.3 L622.7,447.3 L614.5,448.1 L606.6,448.6 L598.6,448.8 L590.4,448.8 L582.1,448.5 L574.1,448.1 L566.7,447.7 L560.0,447.2 L554.4,446.7 L549.8,446.1 L545.6,445.4 L541.7,444.7 L537.5,443.8 L532.6,442.8 L527.1,441.7 L521.3,440.6 L515.2,439.3 L509.0,437.9 L502.7,436.3 L496.4,434.4 L490.0,432.2 L483.4,429.7 L476.8,427.2 L470.2,424.8 L463.7,422.3 L457.6,419.8 L451.7,417.2 L445.9,414.4 L440.3,411.5 L435.0,410.7 L429.8,410.2 L425.0,409.9 L420.3,409.8 L415.7,409.9 L411.3,410.1 L407.3,410.4 L404.0,410.6 L401.6,410.8 M747.0,417.6 L744.2,419.0 L740.3,421.0 L735.7,423.3 L730.7,425.8 L725.3,427.8 L720.0,429.5 L714.5,431.0 L708.5,432.3 L702.3,433.5 L696.0,434.7 L689.9,435.8 L684.1,436.8 L678.8,437.9 L674.0,438.8 L669.3,439.7 L664.4,440.6 L659.1,441.4 L653.1,442.3 L646.2,443.2 L638.8,444.2 L630.8,445.2 L622.7,446.1 L614.5,446.8 L606.6,447.3 L598.6,447.4 L590.4,447.2 L582.1,446.9 L574.1,446.4 L566.7,445.9 L560.0,445.3 L554.4,444.8 L549.8,444.1 L545.6,443.4 L541.7,442.6 L537.5,441.7 L532.6,440.7 L527.1,439.5 L521.3,438.3 L515.2,437.0 L509.0,435.5 L502.7,433.8 L496.4,431.8 L490.0,429.6 L483.4,427.0 L476.8,424.5 L470.2,422.1 L463.7,419.6 L457.6,417.1 L451.7,414.5 L445.9,411.7 L440.3,408.8 L435.0,408.4 L429.8,408.2 L425.0,408.2 L420.3,408.4 L415.7,408.9 L411.3,409.4 L407.3,409.9 L404.0,410.3 L401.6,410.6" stroke="#969696" stroke-width="1" fill="none"/>
<path d="M431.0,100.2 L936,304.5 M421.6,105.7 L936,304.5 M415.4,111.2 L936,304.5 M407.6,118.2 L936,304.5 M401.3,125.3 L936,304.5 M396.6,132.3 L936,304.5 M393.5,138.6 L936,304.5 M393.7,138.8 L741,417 M390.8,146.6 L741,417 M342.3,297.3 L741,417 M339.6,308.3 L741,417 M339.2,319.2 L741,417 M339.6,330.2 L741,417 M342.3,340.2 L741,417 M346.9,351.2 L741,417 M352.4,362.1 L741,417 M359.7,373.1 L741,417 M367.0,383.1 L741,417 M376.1,392.2 L741,417 M385.2,400.4 L741,417 M395.0,406.0 L741,417 M405.0,412.0 L741,417 M386.0,397.0 L737.0,420.0 M393.0,401.0 L724.0,426.0 M401.0,405.0 L711.0,432.0 M411.0,410.0 L699.0,436.5 M425.0,416.0 L686.0,440.5 M445.0,426.0 L672.0,444.5 M470.0,436.0 L655.0,448.5 M500.0,444.0 L635.0,452.5" stroke="#8c8c8c" stroke-width="1.35" fill="none"/>
<path d="M503.5,54.5 L935,302.5 Q946.5,309 946.5,318 L946.5,432 Q946.5,435.5 942,437 C933.8,441.6 910.0,454.8 893.0,464.4 C876.0,474.0 855.5,485.9 840.0,494.8 C824.5,503.7 816.7,508.2 800.0,517.7 C783.3,527.2 756.7,543.4 740.0,552.0 C723.3,560.6 715.0,564.6 700.0,569.5 C685.0,574.4 665.0,578.2 650.0,581.4 C635.0,584.6 625.0,587.2 610.0,588.5 C595.0,589.8 579.7,590.2 560.0,589.0 C540.3,587.8 506.7,583.2 492.0,581.0 C477.3,578.8 480.3,578.2 472.0,575.5 C463.7,572.8 453.1,569.6 442.4,565.0 C431.7,560.4 419.8,554.6 408.0,547.8 C396.2,541.0 381.7,532.3 371.7,524.2 C361.7,516.1 354.2,508.0 347.8,499.0 C341.4,490.0 336.8,479.9 333.5,470.4 C330.2,460.8 328.8,451.3 328.3,441.7 C327.8,432.1 328.3,423.1 330.6,413.0 C332.9,402.9 340.4,386.3 342.3,381.0 M342.3,381.0 C340.9,377.9 336.2,368.3 334.1,362.1 C332.0,355.9 330.6,350.6 329.6,343.9 C328.6,337.2 327.9,329.6 328.3,322.0 C328.8,314.4 330.6,305.2 332.3,298.2 C334.0,291.2 337.6,283.0 338.7,280.0L370.4,179 C373,170 375,160 376.9,155.6 C379,148 380,144 382.1,141.2 C386,134 388,130 391.3,126.9 C396,121 399,117 403,113.9 C407,110 411,107.5 414.7,105.4 C422,100 430,95.5 440,90.4 L503.5,54.5 M342.3,381.0 C344.9,384.2 352.5,394.1 357.8,400.4 C363.1,406.7 370.2,413.9 374.3,418.7 C378.4,423.5 380.4,425.2 382.2,429.0 C384.0,432.8 384.5,439.6 385.0,441.7 L385,507.6 M898.8,352.6 C892.3,355.9 874.1,364.7 860.0,372.6 C845.9,380.5 824.0,394.1 814.0,400.0 C804.0,405.9 811.2,401.8 800.0,408.2 C788.8,414.6 760.3,431.3 747.0,438.7 C733.7,446.1 733.1,447.9 720.0,452.8 C706.9,457.7 684.9,464.4 668.6,468.3 C652.3,472.2 636.8,474.2 622.0,476.0 C607.2,477.8 594.9,479.2 580.0,479.3 C565.1,479.4 547.8,477.9 532.6,476.5 C517.4,475.1 504.6,474.4 488.6,470.9 C472.6,467.4 445.4,458.1 436.7,455.5 L436.7,459" stroke="#111" stroke-width="1.5" fill="none"/>
<ellipse cx="451.4" cy="484" rx="7.7" ry="12.8" transform="rotate(27 451.4 484)" fill="#a8a8ac" stroke="#111" stroke-width="1.5"/>
</svg>
<svg width="70" height="70" style="position:absolute;left:235px;top:695px;" viewBox="235 695 70 70">
<!-- Z arrow -->
<path d="M268.6,734 L255.5,743.3" stroke="#101040" stroke-width="4.6" stroke-linecap="butt"/>
<path d="M268.6,734 L255.5,743.3" stroke="#1c1ce0" stroke-width="2.8"/>
<path d="M252.5,739 L247,747.4 L257,747.4 Z" fill="#1c1ce0" stroke="#101040" stroke-width="0.9"/>
<path d="M249.5,745.5 L254.5,742" stroke="#8fd0ff" stroke-width="0.9"/>
<!-- X arrow -->
<path d="M268.6,734 L281.7,743.3" stroke="#401010" stroke-width="4.6"/>
<path d="M268.6,734 L281.7,743.3" stroke="#d42020" stroke-width="2.8"/>
<path d="M285.4,739 L290.5,747.4 L280.5,747.4 Z" fill="#d42020" stroke="#401010" stroke-width="0.9"/>
<path d="M283,742.5 L287.5,745.5" stroke="#f0d040" stroke-width="0.9"/>
<!-- Y arrow -->
<rect x="267" y="718" width="3.9" height="16" fill="#1e6e1e" stroke="#0c300c" stroke-width="0.6"/>
<path d="M269,710.8 L273.7,717.2 L270.9,720.4 H267 L264.2,717.2 Z" fill="#1e6e1e" stroke="#0c300c" stroke-width="0.8"/>
<path d="M269,713 V719" stroke="#c0c890" stroke-width="0.8" stroke-dasharray="1,1"/>
<!-- letters -->
<path d="M265,701 L268.6,705.4 L272.2,701 M268.6,705.4 V709.8" stroke="#1a7a1a" stroke-width="1" fill="none"/>
<path d="M242,744.6 H246.6 M244.5,744.6 L243.6,752 M242,752 H247" stroke="#2020e0" stroke-width="1" fill="none"/>
<path d="M290,752.8 L294.8,744.2 M290.8,744.8 L294,752.5" stroke="#e02020" stroke-width="1" fill="none"/>
</svg>

<div id="panel"></div>
<div id="topbox"></div>
<div id="bl"></div>

<svg id="icons" width="228" height="270" style="position:absolute;left:0;top:0;">
<defs>
<g id="folder">
 <clipPath id="fclip"><path d="M2.5,17.6 V3.2 Q2.5,2.4 3.3,2.4 H8.6 L10,4.3 H18.4 Q19.6,4.3 19.6,5.7 V17.6 Q19.6,18.4 18.8,18.4 H3.3 Q2.5,18.4 2.5,17.6 Z"/></clipPath>
 <path d="M2.5,17.6 V3.2 Q2.5,2.4 3.3,2.4 H8.6 L10,4.3 H18.4 Q19.6,4.3 19.6,5.7 V17.6 Q19.6,18.4 18.8,18.4 H3.3 Q2.5,18.4 2.5,17.6 Z" fill="#f6f6f6"/>
 <rect x="2" y="2" width="18" height="4.6" fill="#d4d4d4" clip-path="url(#fclip)"/>
 <line x1="3" y1="6.7" x2="19.2" y2="6.7" stroke="#a8a8a8" stroke-width="0.7"/>
 <path d="M2.5,17.6 V3.2 Q2.5,2.4 3.3,2.4 H8.6 L10,4.3 H18.4 Q19.6,4.3 19.6,5.7 V17.6 Q19.6,18.4 18.8,18.4 H3.3 Q2.5,18.4 2.5,17.6 Z" fill="none" stroke="#303030" stroke-width="1.3"/>
</g>
<g id="plane">
 <path d="M1.5,4.5 L12.5,1.2 V14.2 L1.5,17.5 Z" fill="none" stroke="#2a2a2a" stroke-width="1"/>
 <line x1="7" y1="0" x2="7" y2="18.5" stroke="#2a2a2a" stroke-width="1" stroke-dasharray="2.2,1.5"/>
</g>
<g id="body">
 <path d="M1,5 L6,1.5 L15,3 L15.8,13 L10,17 L1.5,14 Z" fill="#7fc0e6" stroke="#1d4f86" stroke-width="1.1"/>
 <path d="M1,5 L9.5,7 L15,3 M9.5,7 L10,17" fill="none" stroke="#1d4f86" stroke-width="1"/>
 <path d="M2,5.5 L9,7.2 L9.5,16 L2.2,13.5 Z" fill="#5ea6d6"/>
 <path d="M8.5,16.5 L15,9 L18,16.5 Z" fill="#f4f4f4" stroke="#222" stroke-width="1.1"/>
 <path d="M10.5,14 L17,14 M15,9 L12.5,16.5 M11,13 L15.8,16.5" stroke="#222" stroke-width="0.7" fill="none"/>
</g>
</defs>
<!-- part icon -->
<path d="M4.3,9.2 L7.3,6 L12,4.2 L16.6,6.3 V10.6 L20.4,12.3 V18.6 L15.2,21.2 L4.3,14 Z" fill="#f6c81e" stroke="#4a2a10" stroke-width="1.1"/>
<path d="M7.3,6 L11.5,8 L16.6,6.3 M11.5,8 V12 L15.6,14.5 L20.4,12.3 M15.6,14.5 V21" fill="none" stroke="#b06a10" stroke-width="0.9"/>
<path d="M11.8,8.3 L16.2,6.8 V10.8 L11.8,12 Z" fill="#fde27a"/>
<path d="M16,14.8 L20,12.8 V18.3 L16,20.5 Z" fill="#fde27a"/>
<!-- arrows -->
<path d="M9.3,31.3 L13.2,34.6 L9.3,37.9 Z" fill="#606060"/>
<path d="M9.3,75.3 L13.2,78.6 L9.3,81.9 Z" fill="#606060"/>
<path d="M7,98.8 L14,98.8 L10.5,102.8 Z" fill="#606060"/>
<!-- folders -->
<use href="#folder" x="24" y="25"/>
<use href="#folder" x="24" y="47"/>
<use href="#folder" x="24" y="69"/>
<use href="#folder" x="24" y="91"/>
<!-- history content -->
<circle cx="37" cy="37.2" r="3.9" fill="#fff" stroke="#222" stroke-width="1.1"/>
<path d="M35.5,35.5 L37.5,37 H39.5" stroke="#222" stroke-width="0.9" fill="none"/>
<path d="M36,33.5 Q32.5,33 32,37.5" stroke="#1f78c8" stroke-width="1.8" fill="none"/>
<path d="M29.5,37.3 L34.5,37.3 L32,40.5 Z" fill="#1f78c8"/>
<!-- sensors content -->
<circle cx="35.6" cy="59.4" r="4.1" fill="#fff" stroke="#111" stroke-width="1.4"/>
<path d="M36.2,63.3 A4,4 0 0 0 39.5,59.9 L36,59.6 Z" fill="#e01010"/>
<path d="M35.4,59.6 L38.6,56.6" stroke="#1a5fc0" stroke-width="1.3"/>
<path d="M32.6,57 L33.8,57.8 M32.4,61.6 L33.6,60.9 M35.4,55.8 V57" stroke="#555" stroke-width="0.8"/>
<!-- annotations A -->
<text x="29.6" y="86.3" font-family="Liberation Serif" font-size="13" font-weight="bold" fill="#2a78c0">A</text>
<!-- solid bodies cube -->
<path d="M31.2,101 L34.6,99.3 L38.2,101 V105.2 L34.6,107.2 L31.2,105.2 Z" fill="#1f6fb8" stroke="#0d2f5c" stroke-width="0.9"/>
<path d="M31.2,101 L34.6,102.7 L38.2,101 M34.6,102.7 V107" stroke="#7fd0f0" stroke-width="0.6" fill="none"/>
<!-- imported1 in bodies -->
<use href="#body" x="49" y="114.5"/>
<!-- material -->
<circle cx="27.5" cy="137.8" r="2" fill="#fff" stroke="#555" stroke-width="0.8"/>
<circle cx="27.5" cy="143.3" r="2" fill="#4aa3df" stroke="#2a6a9a" stroke-width="0.8"/>
<circle cx="27.5" cy="149.3" r="2" fill="#f5a623" stroke="#a06a10" stroke-width="0.8"/>
<rect x="31" y="136.9" width="12" height="1.6" fill="#333"/>
<rect x="31" y="142.6" width="12" height="1.6" fill="#333"/>
<rect x="31" y="148.5" width="4" height="1.6" fill="#333"/>
<circle cx="39.8" cy="150" r="2.6" fill="#222"/>
<path d="M39.8,146.3 V153.7 M36.1,150 H43.5 M37.2,147.4 L42.4,152.6 M42.4,147.4 L37.2,152.6" stroke="#222" stroke-width="1.3"/>
<circle cx="39.8" cy="150" r="0.9" fill="#f5f5f5"/>
<!-- planes -->
<use href="#plane" x="28.5" y="157.5"/>
<use href="#plane" x="28.5" y="179.5"/>
<use href="#plane" x="28.5" y="201.5"/>
<!-- origin -->
<path d="M28.9,226 V239 H42" stroke="#1a1a1a" stroke-width="1.6" fill="none"/>
<path d="M26.2,227.5 L28.9,223.5 L31.6,227.5 Z" fill="#1a1a1a"/>
<path d="M40.5,236.4 L44.3,239 L40.5,241.6 Z" fill="#1a1a1a"/>
<rect x="27.3" y="237.4" width="3" height="3" fill="#1a1a1a"/>
<!-- imported1 root -->
<use href="#body" x="25.5" y="246.5"/>
</svg>

<div id="pborder"></div>
<div id="tab"></div>
<div id="dot"></div>

<div class="row" style="left:27px;top:3px;width:198px;overflow:hidden;">Clamp-2022 (Default) &lt;&lt;Default&gt;_Display State 1&gt;</div>
<div class="row" style="left:49px;top:25px;">History</div>
<div class="row" style="left:49px;top:47px;">Sensors</div>
<div class="row" style="left:49px;top:69px;">Annotations</div>
<div class="row" style="left:49px;top:91px;">Solid Bodies(1)</div>
<div class="row" style="left:71px;top:113px;">Imported1</div>
<div class="row" style="left:49px;top:135px;">Material &lt;not specified&gt;</div>
<div class="row" style="left:49px;top:157px;">Front Plane</div>
<div class="row" style="left:49px;top:179px;">Top Plane</div>
<div class="row" style="left:49px;top:201px;">Right Plane</div>
<div class="row" style="left:49px;top:223px;">Origin</div>
<div class="row" style="left:49px;top:245px;">Imported1</div>

</body></html>
